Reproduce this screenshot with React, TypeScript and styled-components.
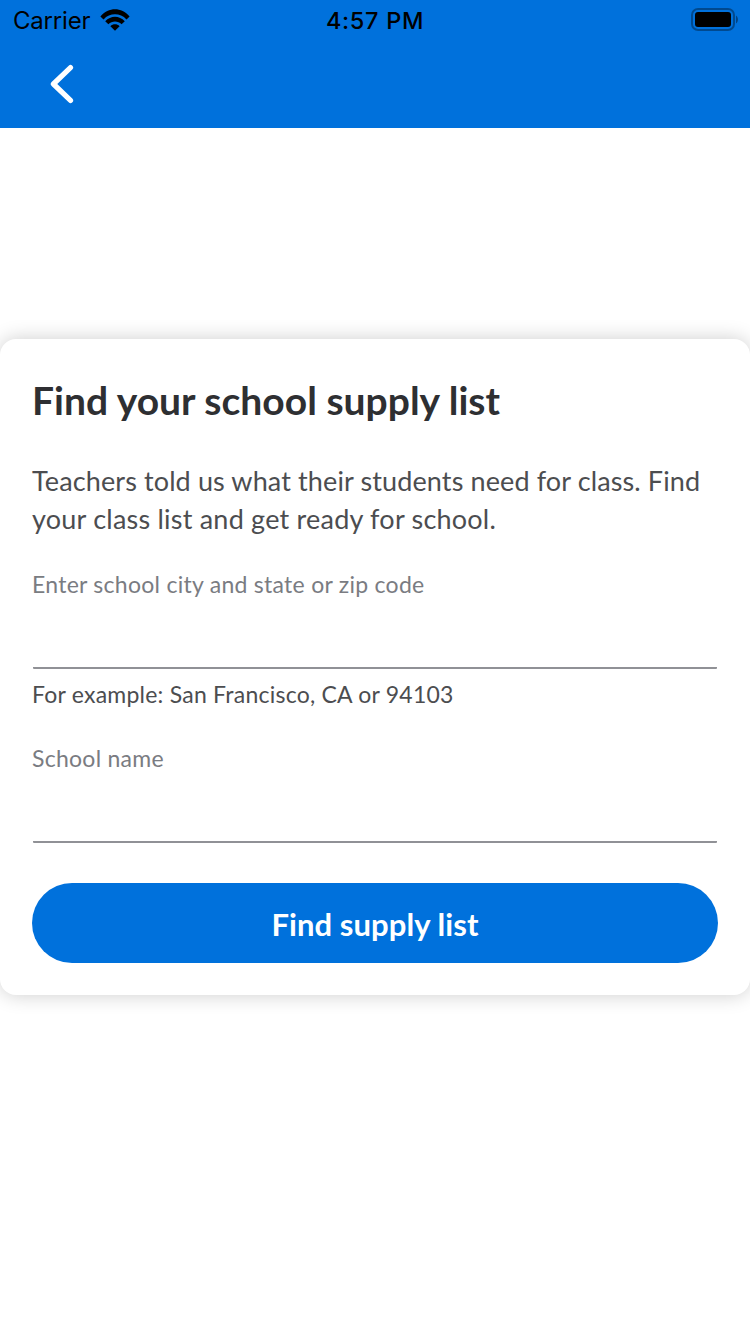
import React from 'react';
import styled, { createGlobalStyle } from 'styled-components';

const GlobalStyle = createGlobalStyle`
  * { box-sizing: border-box; }
  body { margin: 0; background: #fff; font-family: Lato, 'Open Sans', sans-serif; }
`;

const Screen = styled.div`
  display: flex;
  flex-direction: column;
  height: 1334px;
  overflow: hidden;
  background: #fff;
`;

const Header = styled.header`
  height: 128px;
  background: #0071dc;
`;

const StatusBar = styled.div`
  display: grid;
  grid-template-columns: 1fr auto 1fr;
  align-items: center;
  height: 40px;
  padding: 0 12px 0 13px;
  color: #000;
  font-family: Inter, sans-serif;
`;

const Carrier = styled.div`
  display: flex;
  align-items: center;
  gap: 10px;
  font-size: 24px;
  letter-spacing: -0.2px;
`;

const Clock = styled.div`
  margin-left: -1px;
  font-size: 23.5px;
  font-weight: 500;
  letter-spacing: 0.7px;
`;

const BatteryIcon = styled.svg`
  justify-self: end;
  margin-bottom: 2px;
`;

const NavBar = styled.nav`
  display: flex;
  align-items: center;
  height: 88px;
  padding-left: 48px;
`;

const BackButton = styled.button`
  display: flex;
  padding: 0;
  border: 0;
  background: none;
`;

const Card = styled.main`
  display: flex;
  flex-direction: column;
  margin-top: 211px;
  height: 656px;
  padding: 37px 32px 32px;
  border-radius: 16px;
  background: #fff;
  box-shadow: 0 0 20px rgba(0, 0, 0, 0.2);
`;

const Title = styled.h1`
  margin: 0;
  color: #2e2f32;
  font-size: 39px;
  font-weight: 700;
  line-height: 48px;
  letter-spacing: 0.02px;
  white-space: nowrap;
`;

const Intro = styled.p`
  margin: 38px 0 0;
  color: #4c4d50;
  font-size: 27px;
  line-height: 38px;
  letter-spacing: 0.12px;
  white-space: nowrap;
`;

const IntroEnd = styled.span`
  letter-spacing: 0.22px;
`;

const Field = styled.div<{ $gap: number }>`
  display: flex;
  flex-direction: column;
  margin-top: ${(p) => p.$gap}px;
`;

const Label = styled.label`
  color: #7a7c82;
  font-size: 23px;
  line-height: 32px;
  letter-spacing: 0.27px;
`;

const Input = styled.input`
  height: 69px;
  margin: 0 1px;
  padding: 0;
  border: 0;
  border-bottom: 2px solid #909196;
  border-radius: 1px;
  background: none;
  font: inherit;
  font-size: 27px;
  outline: none;
`;

const Hint = styled.span`
  margin-top: 9px;
  color: #4c4d50;
  font-size: 23px;
  line-height: 32px;
  letter-spacing: 0.23px;
`;

const SubmitButton = styled.button`
  height: 80px;
  width: 686px;
  margin-top: 40px;
  padding: 2px 0 0;
  border: 0;
  border-radius: 40px;
  background: #0071dc;
  color: #fff;
  font-family: inherit;
  font-size: 31px;
  font-weight: 700;
  letter-spacing: 0.08px;
`;

export default function App() {
  return (
    <>
      <GlobalStyle />
      <Screen>
        <Header>
          <StatusBar>
            <Carrier>
              Carrier
              <svg width="30" height="22" viewBox="0 0 30 22">
                <path d="M0.4 7.4C8.6-2 21.4-2 29.6 7.4L26.5 10.4C20.1 3.6 9.9 3.6 3.5 10.4Z" />
                <path d="M5.2 12.2C10.7 6.2 19.3 6.2 24.8 12.2L21.6 15.3C17.9 11.7 12.1 11.7 8.4 15.3Z" />
                <path d="M10.4 17.2C13 14.6 17 14.6 19.6 17.2L15 21.8Z" />
              </svg>
            </Carrier>
            <Clock>4:57 PM</Clock>
            <BatteryIcon width="48" height="23" viewBox="0 0 48 23">
              <rect x="2" y="1" width="42" height="21" rx="6" fill="none" stroke="#000" strokeOpacity="0.35" strokeWidth="2" />
              <rect x="5" y="4" width="36" height="15" rx="3" />
              <path d="M46 7.5C48.6 9 48.6 14 46 15.5Z" fillOpacity="0.4" />
            </BatteryIcon>
          </StatusBar>
          <NavBar>
            <BackButton aria-label="Back">
              <svg width="28" height="40" viewBox="0 0 28 40" fill="none" stroke="#fff" strokeWidth="5.2" strokeLinecap="round" strokeLinejoin="round">
                <path d="M22.5 3.6L5.4 20L22.5 36.4" />
              </svg>
            </BackButton>
          </NavBar>
        </Header>
        <Card>
          <Title>Find your school supply list</Title>
          <Intro>
            Teachers told us what their students need for class. Find
            <br />
            <IntroEnd>your class list and get ready for school.</IntroEnd>
          </Intro>
          <Field $gap={30}>
            <Label htmlFor="city">Enter school city and state or zip code</Label>
            <Input id="city" />
            <Hint>For example: San Francisco, CA or 94103</Hint>
          </Field>
          <Field $gap={32}>
            <Label htmlFor="school">School name</Label>
            <Input id="school" />
          </Field>
          <SubmitButton>Find supply list</SubmitButton>
        </Card>
      </Screen>
    </>
  );
}
